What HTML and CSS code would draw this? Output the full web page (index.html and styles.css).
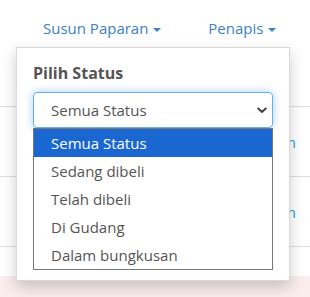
FILE: index.html
```html
<!DOCTYPE html>
<html>
<head>
<meta charset="utf-8">
<link rel="stylesheet" href="styles.css">
</head>
<body>
<div class="page">
  <nav class="topnav">
    <a class="navlink">Susun Paparan <span class="caret"></span></a>
    <a class="navlink">Penapis <span class="caret"></span></a>
  </nav>
  <div class="rows">
    <div class="row row-first"></div>
    <div class="row"><span class="rowlink">Lihat Pesanan</span></div>
    <div class="row"><span class="rowlink">Lihat Pesanan</span></div>
    <div class="row row-short"></div>
    <div class="row row-alert"></div>
  </div>

  <div class="menu">
    <div class="menu-label">Pilih Status</div>
    <div class="select">
      <span>Semua Status</span>
      <svg class="chev" width="10" height="7" viewBox="0 0 10 7"><path d="M1.3 1.5 L5 5 L8.7 1.5" fill="none" stroke="#444" stroke-width="2.1" stroke-linecap="round" stroke-linejoin="round"/></svg>
    </div>
    <ul class="options">
      <li class="opt selected">Semua Status</li>
      <li class="opt">Sedang dibeli</li>
      <li class="opt">Telah dibeli</li>
      <li class="opt">Di Gudang</li>
      <li class="opt">Dalam bungkusan</li>
    </ul>
  </div>
</div>
</body>
</html>
```
FILE: styles.css
```css
* { box-sizing: border-box; }
html, body { margin: 0; padding: 0; background: #fff; }
body { font-family: "Open Sans", "Noto Sans", sans-serif; color: #555; overflow: hidden; }
.page { position: relative; width: 310px; height: 297px; overflow: hidden; }

.topnav {
  display: flex;
  gap: 47px;
  padding: 17px 0 0 43px;
  height: 47px;
}
.navlink {
  color: #3d80c4;
  font-size: 15px;
  line-height: 22px;
  text-decoration: none;
  white-space: nowrap;
}
.caret {
  display: inline-block;
  width: 0; height: 0;
  border-left: 4px solid transparent;
  border-right: 4px solid transparent;
  border-top: 4px solid #3d80c4;
  vertical-align: middle;
  margin-left: 1px;
}

.rows { display: flex; flex-direction: column; }
.row {
  height: 70px;
  border-bottom: 1px solid #ddd;
  display: flex;
  align-items: center;
  justify-content: flex-end;
  padding-right: 14px;
}
.row-first { height: 60px; }
.row-short { height: 29px; border-bottom: none; }
.row-alert { height: 30px; background: #f9eeed; border-bottom: none; }
.rowlink { color: #1ea1dc; font-size: 15px; white-space: nowrap; }

.menu {
  position: absolute;
  left: 16px;
  top: 47px;
  width: 274px;
  height: 234px;
  background: #fff;
  border: 1px solid rgba(0,0,0,.15);
  box-shadow: 0 6px 14px rgba(0,0,0,.2);
  padding: 14px 16px 0 16px;
}
.menu-label {
  font-weight: 700;
  font-size: 16px;
  line-height: 22px;
  color: #555;
  margin-bottom: 8px;
}
.select {
  height: 36px;
  width: 240px;
  border: 1px solid #66afe9;
  border-radius: 4px;
  box-shadow: 0 0 8px rgba(102,175,233,.6);
  display: flex;
  align-items: center;
  justify-content: space-between;
  padding: 0 5px 0 17px;
  font-size: 15px;
  color: #555;
}
.chev { display: block; }
.options {
  list-style: none;
  margin: 0;
  padding: 0;
  width: 240px;
  border: 1px solid #767676;
}
.opt {
  height: 28px;
  line-height: 28px;
  padding-left: 17px;
  font-size: 15px;
  color: #555;
}
.opt.selected { background: #1a67d2; color: #fff; }
```
